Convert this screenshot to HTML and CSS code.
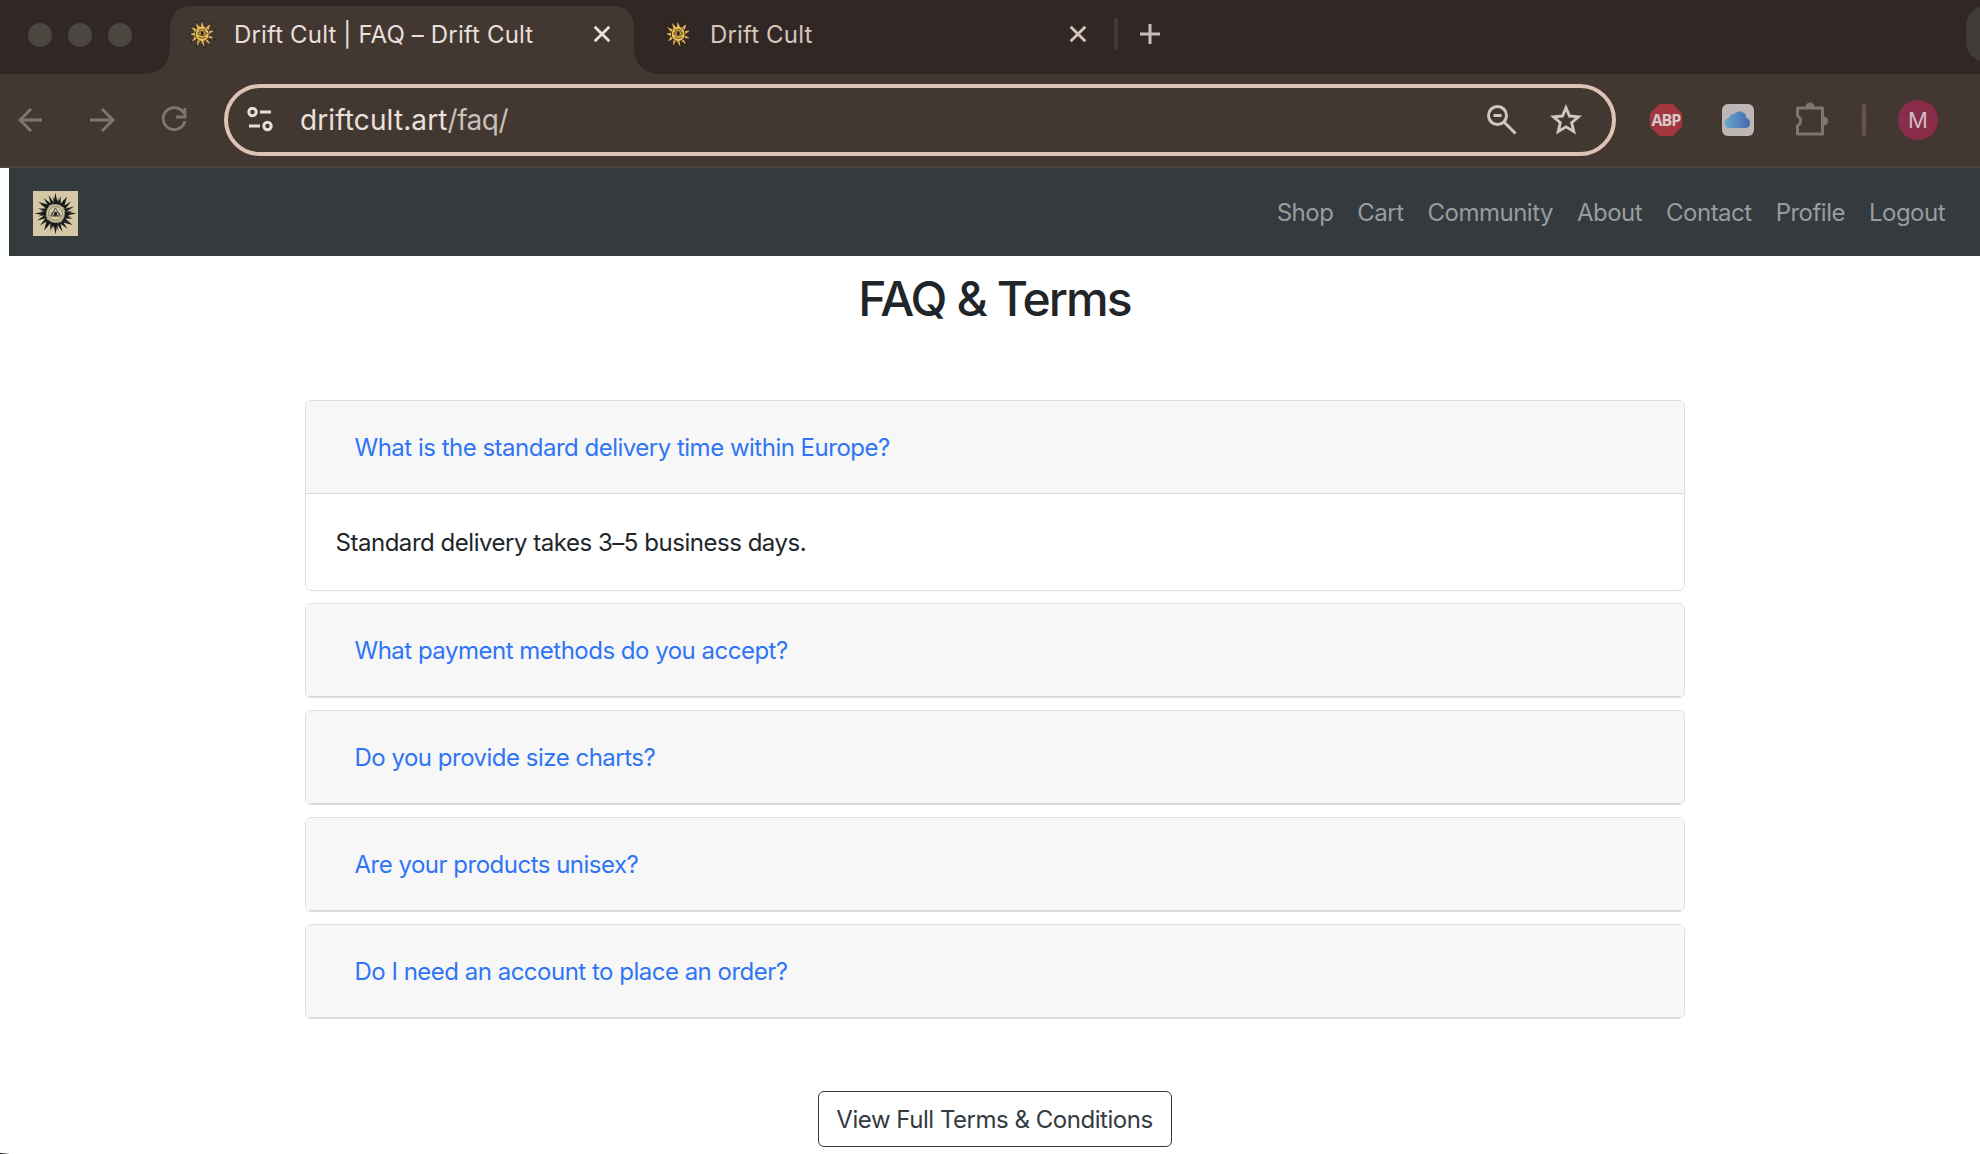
FILE: index.html
```html
<!DOCTYPE html>
<html lang="en">
<head>
<meta charset="utf-8">
<title>Drift Cult | FAQ – Drift Cult</title>
<link rel="stylesheet" href="styles.css">
</head>
<body>
<svg class="defs" width="0" height="0" aria-hidden="true">
  <symbol id="sun" viewBox="0 0 26 30">
    <path fill="#e0b552" d="M12 8l.5-5.500L15 8zM17 8.500L21.500 5 19.500 11zM20 12l5-.500-4.500 3.500zM20.500 16.500l4.500 3-5.500-.5zM18.500 20.500l3 5-5-3.500zM14.500 22l1 6-3.500-5.500zM11 22l-3 5 .500-6zM7.500 20L3 22.500 6 17zM6 17l-5-2 5-1.500zM6 13L2 8l6 2.500zM8.500 10.500L7 4l4.500 4.500z"/>
    <ellipse cx="13.200" cy="15" rx="6.500" ry="7.200" fill="#efc25b"/>
    <path d="M12.500 1v2M22 4l-1 1.500M24.500 11h1.500M24.500 20h1.500M21 25l1 1.500M15.500 27.500v2M8 26.500l-1 1.500M3 22l-1.500 1M0 15h1.500M2 8L1 7M7 4L6.500 2.500" stroke="#292417" stroke-width="1.800"/>
    <path d="M8.500 14.500q4.700-4.500 9.400 0q-4.700 4.500-9.400 0M9.500 11.500q3.700-2.500 7.400 0M9.500 18q3.700 2.500 7.400 0" fill="none" stroke="#765f2b" stroke-width="1.200"/>
    <circle cx="13.200" cy="14.500" r="1.700" fill="#2e2616"/>
  </symbol>
  <symbol id="cross" viewBox="0 0 16 16"><path d="M1.500 1.500l13 13M14.500 1.500l-13 13"/></symbol>
</svg>
<header class="browser">
  <div class="tabs">
    <div class="lights"><i></i><i></i><i></i></div>
    <div class="tab active">
      <svg class="fav"><use href="#sun"/></svg>
      <span class="title">Drift Cult | FAQ – Drift Cult</span>
      <svg class="close"><use href="#cross"/></svg>
    </div>
    <div class="tab second">
      <svg class="fav"><use href="#sun"/></svg>
      <span class="title">Drift Cult</span>
      <svg class="close"><use href="#cross"/></svg>
    </div>
    <i class="tab-rule"></i>
    <svg class="plus" viewBox="0 0 20 20"><path d="M10 0v20M0 10h20"/></svg>
    <i class="pill"></i>
  </div>
  <div class="toolbar">
    <svg class="nav-icons" viewBox="0 0 190 40" fill="none" stroke="#81756f" stroke-width="2.800">
      <path d="M42 20H20M31 9L20 20l11 11M90 20h23M102 9l11 11-11 11M184 13.500a11 11 0 1 0 1 7.500M185 8v9h-9"/>
    </svg>
    <div class="omnibox">
      <svg class="tune" viewBox="0 0 26 26" fill="none" stroke="#e9ded9" stroke-width="3"><circle cx="5.500" cy="5" r="3.700"/><circle cx="20.500" cy="19" r="3.700"/><path d="M13 5h11M2 19h11"/></svg>
      <span class="url">driftcult.art<em>/faq/</em></span>
      <svg class="lens" viewBox="0 0 30 30" fill="none" stroke="#cfc7c2" stroke-width="3"><circle cx="10.500" cy="10.500" r="9"/><path d="M17 17l11.500 11.500M6.500 10.500h8"/></svg>
      <svg class="star" viewBox="0 0 30 30" fill="none" stroke="#cfc7c2" stroke-width="2.700"><path d="M15 3.500l3.300 7.800 8.400.7-6.400 5.500 2 8.300-7.300-4.400-7.300 4.400 2-8.300-6.400-5.500 8.400-.7z"/></svg>
    </div>
    <div class="abp"><span>ABP</span></div>
    <svg class="cloud" viewBox="0 0 32 32"><defs><linearGradient id="sky"><stop stop-color="#6aa9c8"/><stop offset="1" stop-color="#4468b5"/></linearGradient></defs><rect width="32" height="32" rx="6" fill="#bcb6b5"/><path d="M8 24a5 5 0 0 1-1-10 5 5 0 0 1 5-4 7 7 0 0 1 12.500 4A5.200 5.200 0 0 1 24 24z" fill="url(#sky)"/></svg>
    <svg class="puzzle" viewBox="0 0 34 34" fill="none" stroke="#81756f" stroke-width="3"><path d="M3.500 6h25v26h-25v-8.500a5.200 5.200 0 0 0 0-9.500z" stroke-linejoin="round"/><path d="M11.500 5a4.500 4.500 0 0 1 9 0zM29.500 14.500a4.500 4.500 0 0 1 0 9z" fill="#81756f" stroke="none"/></svg>
    <i class="rule"></i>
    <div class="avatar">M</div>
  </div>
</header>
<main class="page">
  <nav class="navbar">
    <svg class="logo" viewBox="0 0 45 45">
      <defs><path id="rays" fill="#191b19" d="M20.300 13.500L22.500 1.500l2.200 12zM24.500 13.500L27.500 5 27.800 14zM26.500 14L34 5.500 31 16.500zM30 15.500L38 10.500 32 18.500zM31 18L41 15.500 33 21zM23.200 13.500L25.200 7l.8 7zM28.500 14.500l2-6 .2 7zM32 21l8.500-1.500-8 3z"/></defs>
      <rect width="45" height="45" fill="#d5c8a7"/>
      <use href="#rays"/>
      <use href="#rays" transform="rotate(90 22.500 22.500)"/>
      <use href="#rays" transform="rotate(180 22.500 22.500)"/>
      <use href="#rays" transform="rotate(270 22.500 22.500)"/>
      <circle cx="22.500" cy="22.500" r="9.200" fill="#d5c8a7" stroke="#77715f" stroke-width=".8"/>
      <circle cx="22.500" cy="22.500" r="7" fill="none" stroke="#86806c"/>
      <path d="M22.500 17l4.800 8h-9.600zM18 23q4.500-4 9 0q-4.500 4-9 0" fill="none" stroke="#45463c" stroke-width=".9"/>
      <circle cx="22.500" cy="23" r="1.700" fill="#191b19"/>
    </svg>
    <div class="links"><a>Shop</a><a>Cart</a><a>Community</a><a>About</a><a>Contact</a><a>Profile</a><a>Logout</a></div>
  </nav>
  <h1>FAQ &amp; Terms</h1>
  <section class="faq">
    <article class="card"><h2>What is the standard delivery time within Europe?</h2><p>Standard delivery takes 3–5 business days.</p></article>
    <article class="card"><h2>What payment methods do you accept?</h2></article>
    <article class="card"><h2>Do you provide size charts?</h2></article>
    <article class="card"><h2>Are your products unisex?</h2></article>
    <article class="card"><h2>Do I need an account to place an order?</h2></article>
  </section>
  <a class="terms">View Full Terms &amp; Conditions</a>
</main>
<i class="corner"></i>
</body>
</html>
```
FILE: styles.css
```css
* { box-sizing: border-box; }
body { margin: 0; height: 1154px; overflow: hidden; background: #fff; font-family: Inter, "Liberation Sans", sans-serif; font-size: 24px; letter-spacing: -0.47px; color: #212529; white-space: nowrap; }
svg { display: block; flex: none; }
.defs { position: absolute; }
i, em { font-style: normal; }
.browser { height: 168px; background: #433732; border-bottom: 2px solid #4b423e; }
.tabs { height: 74px; display: flex; align-items: center; background: #312826; padding-left: 28px; overflow: hidden; }
.lights { display: flex; gap: 16px; width: 142px; padding-bottom: 4px; }
.lights i { width: 24px; height: 24px; border-radius: 50%; background: #4c4641; }
.tab { display: flex; align-items: center; }
.title { letter-spacing: 0.15px; }
.tab .fav { width: 26px; height: 30px; margin-right: 19px; }
.close { width: 18px; height: 18px; margin-left: auto; fill: none; stroke: #eadfda; stroke-width: 2.500; }
.active { position: relative; align-self: flex-end; width: 464px; height: 68px; padding: 0 23px 12px 19px; background: #433732; border-radius: 20px 20px 0 0; color: #eadfda; }
.active::before, .active::after { content: ""; position: absolute; bottom: 0; width: 24px; height: 24px; }
.active::before { right: 100%; background: radial-gradient(circle at 0 0, #312826 23.500px, #433732 24px); }
.active::after { left: 100%; background: radial-gradient(circle at 100% 0, #312826 23.500px, #433732 24px); }
.second { width: 480px; height: 62px; padding: 0 27px 6px 31px; color: #d8c5bc; }
.second .close { stroke: #d8c5bc; }
.tab-rule { width: 4px; height: 32px; border-radius: 2px; background: #3f3b38; margin-bottom: 6px; }
.plus { width: 20px; height: 20px; margin: 0 0 6px 22px; stroke: #c5beba; stroke-width: 3; }
.pill { flex: none; width: 60px; height: 56px; margin: 0 -46px 6px auto; border-radius: 20px; background: #3f3b38; }
.toolbar { height: 92px; display: flex; align-items: center; }
.nav-icons { width: 190px; height: 40px; }
.omnibox { width: 1392px; height: 72px; margin: 0 34px; border: 4px solid #dcc3b5; border-radius: 36px; display: flex; align-items: center; padding: 0 30px 0 19px; }
.tune { width: 26px; height: 26px; margin-right: 27px; }
.url { font-size: 28px; letter-spacing: 0.12px; color: #ebe1dc; }
.url em { letter-spacing: -0.500px; color: #c9c0ba; }
.lens { width: 30px; height: 30px; margin-left: auto; margin-right: 33px; }
.star { width: 32px; height: 32px; }
.abp { width: 32px; height: 32px; background: #a33740; clip-path: polygon(29% 0, 71% 0, 100% 29%, 100% 71%, 71% 100%, 29% 100%, 0 71%, 0 29%); display: flex; align-items: center; justify-content: center; color: #d5cac7; font: 700 16px "Open Sans", sans-serif; letter-spacing: -1px; }
.cloud { width: 32px; height: 32px; margin-left: 40px; }
.puzzle { width: 34px; height: 34px; margin: 0 34px 3px 40px; }
.rule { width: 4px; height: 32px; border-radius: 2px; background: #65544a; }
.avatar { width: 40px; height: 40px; margin-left: 32px; border-radius: 50%; background: #892c4a; color: #d0bdc3; font-size: 22px; letter-spacing: 0; display: flex; align-items: center; justify-content: center; }
.page { margin-left: 9px; display: flex; flex-direction: column; align-items: center; }
.navbar { width: 100%; height: 88px; background: #343a3e; display: flex; align-items: center; justify-content: space-between; padding: 3px 35px 0 24px; }
.logo { width: 45px; height: 45px; }
.links { display: flex; gap: 24px; padding-bottom: 2px; letter-spacing: -0.51px; color: #999c9e; }
h1 { margin: 11px 0 0; height: 133px; line-height: 64px; font-size: 48px; font-weight: 550; letter-spacing: -1.900px; }
.faq { width: 1380px; display: flex; flex-direction: column; gap: 12px; }
.card { border: 1px solid #dfdfdf; border-radius: 6px; overflow: hidden; background: #fff; }
h2 { margin: 0; height: 93px; line-height: 94px; padding-left: 49px; font-size: 24px; font-weight: 400; letter-spacing: -0.500px; background: #f7f7f7; border-bottom: 1px solid #d8d8d8; color: #2f75f5; }
p { margin: 0; height: 96px; line-height: 97px; padding-left: 30px; }
.terms { margin-top: 72px; width: 354px; height: 56px; border: 1px solid #343a40; border-radius: 6px; display: flex; align-items: center; justify-content: center; color: #343a40; }
.corner { position: absolute; left: 0; bottom: 0; width: 10px; height: 1px; background: linear-gradient(90deg, #000, #fff); }
```
